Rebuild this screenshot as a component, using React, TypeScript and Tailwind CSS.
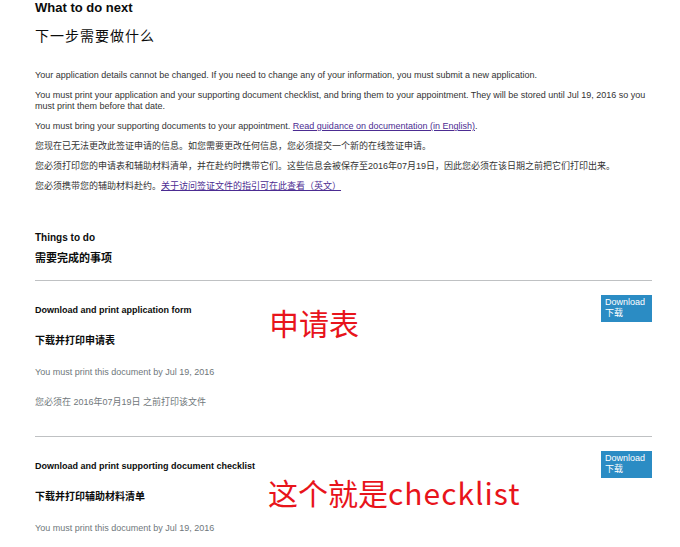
import React from "react";

const FONT = { fontFamily: '"Liberation Sans", Arial, "Noto Sans CJK SC", sans-serif' };
const NOTE_FONT = { fontFamily: '"Noto Sans CJK SC", "Noto Sans", sans-serif' };

function DownloadButton() {
  return (
    <div className="mt-[14px] w-[51px] h-[27px] shrink-0 bg-[#2b8cc4] text-white text-[9px] leading-[11px] pl-[4px] pt-[2px]">
      <div>Download</div>
      <div>下载</div>
    </div>
  );
}

function TaskItem({
  en,
  cn,
  showCn,
  children,
}: {
  en: string;
  cn: string;
  showCn: boolean;
  children: React.ReactNode;
}) {
  return (
    <div className="relative border-t border-[#bfc1c3] flex justify-between">
      <div className="pt-[24px]">
        <div className="text-[9px] leading-[11px] font-bold text-[#0b0c0c]">{en}</div>
        <div className="mt-[18px] text-[10px] leading-[13px] font-bold text-[#0b0c0c]">{cn}</div>
        <div className="mt-[20px] text-[9px] leading-[11px] text-[#6f777b]">
          You must print this document by Jul 19, 2016
        </div>
        {showCn && (
          <div className="mt-[19px] text-[9px] leading-[11px] text-[#6f777b] pb-[28px]">
            您必须在 2016年07月19日 之前打印该文件
          </div>
        )}
      </div>
      <DownloadButton />
      {children}
    </div>
  );
}

export default function App() {
  return (
    <div className="w-[680px] h-[547px] overflow-hidden bg-white pl-[35px] pr-[28px]" style={FONT}>
      <h1 className="text-[13px] leading-[16px] font-bold text-[#0b0c0c]">What to do next</h1>
      <h2 className="mt-[11px] text-[14px] leading-[18px] text-[#0b0c0c] tracking-[1px]">下一步需要做什么</h2>

      <div className="mt-[25px] text-[9px] leading-[11px] text-[#333333] flex flex-col gap-[9px]">
        <p>
          Your application details cannot be changed. If you need to change any of your information, you must
          submit a new application.
        </p>
        <p className="pr-[4px]">
          You must print your application and your supporting document checklist, and bring them to your
          appointment. They will be stored until Jul 19, 2016 so you must print them before that date.
        </p>
        <p>
          You must bring your supporting documents to your appointment.{" "}
          <span className="text-[#4c2c92] underline">Read guidance on documentation (in English)</span>.
        </p>
        <p>您现在已无法更改此签证申请的信息。如您需要更改任何信息，您必须提交一个新的在线签证申请。</p>
        <p>您必须打印您的申请表和辅助材料清单，并在赴约时携带它们。这些信息会被保存至2016年07月19日，因此您必须在该日期之前把它们打印出来。</p>
        <p>
          您必须携带您的辅助材料赴约。
          <span className="text-[#4c2c92] underline">关于访问签证文件的指引可在此查看（英文）</span>
        </p>
      </div>

      <div className="mt-[39px] text-[10px] leading-[13px] font-bold text-[#0b0c0c]">Things to do</div>
      <div className="mt-[7px] text-[11px] leading-[14px] font-bold text-[#0b0c0c]">需要完成的事项</div>

      <div className="mt-[15px]">
        <TaskItem en="Download and print application form" cn="下载并打印申请表" showCn={true}>
          <div
            className="absolute left-[234px] top-[25px] text-[30px] leading-[32px] text-[#e8141b] whitespace-nowrap"
            style={NOTE_FONT}
          >
            申请表
          </div>
        </TaskItem>
        <TaskItem en="Download and print supporting document checklist" cn="下载并打印辅助材料清单" showCn={false}>
          <div
            className="absolute left-[233px] top-[39px] text-[30px] leading-[32px] text-[#e8141b] whitespace-nowrap"
            style={NOTE_FONT}
          >
            这个就是<span className="tracking-[1px]">checklist</span>
          </div>
        </TaskItem>
      </div>
    </div>
  );
}
